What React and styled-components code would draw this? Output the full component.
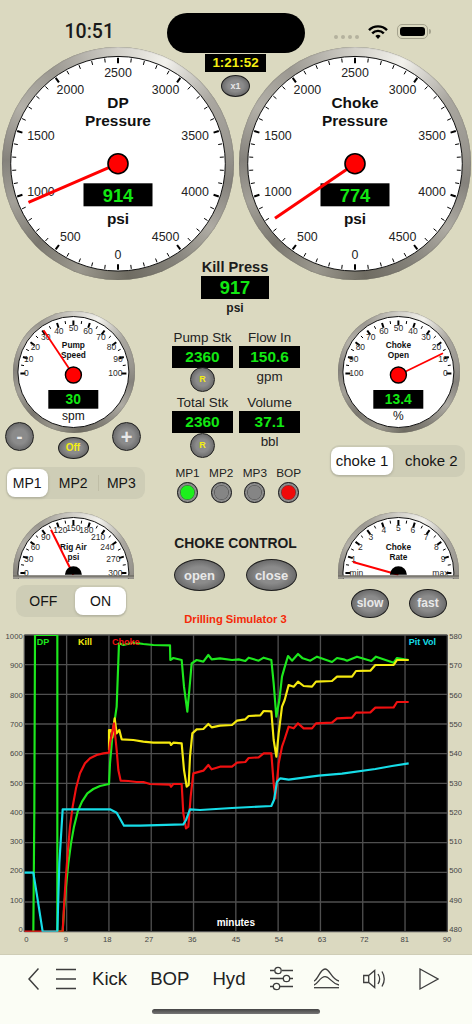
import React from "react";
import styled, { createGlobalStyle } from "styled-components";

const SANS = `"Liberation Sans", Arial, sans-serif`;

const Global = createGlobalStyle`
  html, body { margin: 0; padding: 0; background: #dbd9c0; }
  body { font-family: ${SANS}; }
`;

const Root = styled.div`
  position: relative;
  width: 472px;
  height: 1024px;
  overflow: hidden;
  background: #dbd9c0;
  color: #1c1c1c;
`;

/* status bar */
const StatusBar = styled.div`
  position: relative;
  height: 46.7px;
  display: flex;
  align-items: flex-start;
`;
const Clock = styled.div`
  margin: 20px 0 0 64.5px;
  font: 500 19.5px/24px Roboto, ${SANS};
  color: #1a1a1a;
`;
const Island = styled.div`
  position: absolute;
  left: 167px;
  top: 13px;
  width: 138px;
  height: 40px;
  border-radius: 20px;
  background: #000;
  z-index: 3;
`;
const StatusRight = styled.div`
  margin: 24px 0 0 auto;
  padding-right: 44px;
  display: flex;
  align-items: flex-start;
`;
const Dots = styled.div`
  display: flex;
  gap: 3px;
  margin: 11px 9px 0 0;
  i {
    width: 4px;
    height: 4px;
    border-radius: 50%;
    background: #b4b29d;
  }
`;
const Battery = styled.div`
  position: relative;
  box-sizing: border-box;
  width: 31px;
  height: 15px;
  margin-left: 9px;
  padding: 2px;
  border: 1px solid #a5a38e;
  border-radius: 5px;
  &::before {
    content: "";
    display: block;
    height: 100%;
    border-radius: 3px;
    background: #000;
  }
  &::after {
    content: "";
    position: absolute;
    right: -4px;
    top: 4px;
    width: 2px;
    height: 5px;
    border-radius: 0 2px 2px 0;
    background: #a5a38e;
  }
`;

/* gauges */
const METAL = `#d2d0c9 0deg, #f2f1ec 25deg, #aba8a1 55deg, #98958e 85deg, #85827c 100deg, #aeaba3 125deg,
  #85827a 150deg, #6f6c62 175deg, #9b988e 200deg, #7b7870 225deg, #a3a098 250deg, #85827c 272deg,
  #b3b0a8 300deg, #9c9992 325deg, #d2d0c9 360deg`;

const Dial = styled.div`
  position: relative;
  flex: none;
  width: ${(p) => p.$w}px;
  height: ${(p) => p.$h}px;
  margin-left: ${(p) => p.$ml || 0}px;
  border-radius: ${(p) => (p.$half ? `${p.$w / 2}px ${p.$w / 2}px 0 0` : "50%")};
  background: conic-gradient(from 0deg at 50% ${(p) => (p.$half ? "94%" : "50%")}, ${METAL});
  box-shadow: inset 0 0 1px #55524a;
  overflow: hidden;
  svg {
    display: block;
  }
`;

const rad = (d) => (d * Math.PI) / 180;

const Gauge = ({ cfg, labels, title, titleDy = [], value, unit, tip, ml }) => {
  const { w, h, half, cx, cy, hubY, face, start, step, divs, major, minor, rx, ry, inset, fs, labelColor,
    titleSize, unitBold, unitSize, unitY, box, valueSize, hubR, width } = cfg;
  const ticks = [];
  const total = half || start === -90 ? (labels.length - 1) * divs + 1 : labels.length * divs;
  for (let i = 0; i < total; i++) {
    const a = rad(start + (i * step) / divs);
    const big = i % divs === 0;
    const inner = big ? major[1] : minor[1];
    const outer = big ? major[0] : minor[0];
    ticks.push(
      <line
        key={i}
        x1={cx + Math.sin(a) * inner}
        y1={cy - Math.cos(a) * inner}
        x2={cx + Math.sin(a) * outer}
        y2={cy - Math.cos(a) * outer}
        stroke="#000"
        strokeWidth={big ? width * 2 : width}
      />
    );
  }
  return (
    <Dial $w={w} $h={h} $half={half} $ml={ml}>
      <svg width={w} height={h} viewBox={`0 0 ${w} ${h}`} fontFamily={SANS}>
        <circle cx={cx} cy={half ? cy : h / 2} r={face} fill="#fff" stroke="#111" strokeWidth="1" />
        {ticks}
        {labels.map((l, i) => {
          const a = rad(start + i * step);
          const extra = inset ? Math.max(l.length - 2, 0) * inset : 0;
          return (
            <text
              key={l}
              x={cx + Math.sin(a) * (rx - extra)}
              y={cy - Math.cos(a) * ry}
              fontSize={fs}
              fill={labelColor}
              textAnchor="middle"
              dominantBaseline="central"
            >
              {l}
            </text>
          );
        })}
        {title.map((t, i) => (
          <text
            key={t}
            x={cx}
            y={titleDy[i]}
            fontSize={titleSize}
            fontWeight="700"
            fill="#111"
            textAnchor="middle"
            dominantBaseline="central"
          >
            {t}
          </text>
        ))}
        {box && (
          <g>
            <rect x={box.x} y={box.y} width={box.w} height={box.h} fill="#000" />
            <text
              x={box.x + box.w / 2}
              y={box.y + box.h / 2 + 0.5}
              fontSize={valueSize}
              fontWeight="700"
              fill="#12e812"
              textAnchor="middle"
              dominantBaseline="central"
            >
              {value}
            </text>
            <text
              x={cx}
              y={unitY}
              fontSize={unitSize}
              fontWeight={unitBold ? 700 : 400}
              fill="#111"
              textAnchor="middle"
              dominantBaseline="central"
            >
              {unit}
            </text>
          </g>
        )}
        <line x1={cx} y1={hubY} x2={tip[0]} y2={tip[1]} stroke="#f00" strokeWidth={half ? 2 : cfg.needle} />
        {half ? (
          <g>
            <path d={`M${cx - hubR} ${hubY}a${hubR} ${hubR} 0 0 1 ${hubR * 2} 0z`} fill="#000" />
            <rect x="0" y={h - 3.2} width={w} height="3.2" fill="#9a978f" />
            <rect x="0" y={h - 3.2} width={w} height="1" fill="#5f5c54" />
          </g>
        ) : (
          <circle cx={cx} cy={hubY} r={hubR} fill="#f00" stroke="#000" strokeWidth={cfg.needle === 3 ? 1.6 : 1.4} />
        )}
      </svg>
    </Dial>
  );
};

const BIG = {
  w: 232, h: 233.5, cx: 116, cy: 116.7, hubY: 116.7, face: 107.3, start: 180, step: 36, divs: 5,
  major: [106, 100.5], minor: [106, 102], rx: 81, ry: 91, fs: 12.4, labelColor: "#222", width: 1,
  titleSize: 15.4, unitSize: 15.4, unitBold: true, unitY: 171.5, box: { x: 81.5, y: 136.3, w: 69, h: 23 },
  valueSize: 18.3, hubR: 10, needle: 3,
};
const SMALL = {
  w: 122, h: 122, cx: 60.4, cy: 62.4, hubY: 64, face: 55.5, start: -90, step: 18, divs: 2,
  major: [53, 48], minor: [53, 50], rx: 47, ry: 45, inset: 5, fs: 8.5, labelColor: "#2a2a2a", width: 1,
  titleSize: 8.3, unitSize: 12, unitY: 105.3, box: { x: 35.3, y: 79, w: 50, h: 18.7 }, valueSize: 13.8,
  hubR: 8, needle: 1.8,
};
const HALF = {
  ...SMALL, w: 121, h: 66.7, half: true, cx: 60.4, cy: 61, hubY: 62.8, box: null, hubR: 8.5,
};

const range = (from, to, by) => {
  const out = [];
  for (let v = from; by > 0 ? v <= to : v >= to; v += by) out.push(String(v));
  return out;
};

/* top section */
const TopGauges = styled.div`
  position: relative;
  display: flex;
  gap: 5px;
  padding-left: 1.5px;
`;
const TimerStack = styled.div`
  position: absolute;
  left: 205px;
  top: 7.5px;
  width: 61px;
  display: flex;
  flex-direction: column;
  align-items: center;
  gap: 3px;
`;
const Timer = styled.div`
  width: 100%;
  height: 18px;
  background: #000;
  color: #f3ee12;
  font-size: 13.4px;
  font-weight: 700;
  line-height: 18px;
  text-align: center;
`;
const KillStack = styled.div`
  position: absolute;
  left: 195px;
  top: 212px;
  width: 80px;
  display: flex;
  flex-direction: column;
  align-items: center;
  font-weight: 700;
`;
const KillLabel = styled.div`
  font-size: 14.6px;
  line-height: 16px;
`;
const KillUnit = styled.div`
  font-size: 12px;
  line-height: 14px;
  margin-top: 2px;
`;

const Readout = styled.div`
  box-sizing: border-box;
  width: ${(p) => p.$w}px;
  height: ${(p) => p.$h}px;
  margin-top: ${(p) => p.$mt || 0}px;
  background: #000;
  color: #12e812;
  font-size: ${(p) => p.$fs}px;
  font-weight: 700;
  line-height: ${(p) => p.$h + 1}px;
  text-align: center;
`;

const Pill = styled.button`
  flex: none;
  box-sizing: border-box;
  width: ${(p) => p.$w}px;
  height: ${(p) => p.$h}px;
  margin: ${(p) => p.$m || 0};
  padding: 0;
  border: 1.6px solid #1e1e1e;
  border-radius: 50%;
  background: radial-gradient(closest-side, #8b8b8b 55%, #6c6c6c 100%);
  color: ${(p) => p.$color || "#e8e8e8"};
  font-family: ${SANS};
  font-size: ${(p) => p.$fs}px;
  font-weight: 700;
  line-height: 1;
`;

/* middle section */
const MidRow = styled.div`
  display: flex;
  height: 192.3px;
  margin-top: 31px;
`;
const SideCol = styled.div`
  flex: none;
  width: ${(p) => p.$w}px;
  display: flex;
  flex-direction: column;
`;
const ButtonRow = styled.div`
  display: flex;
  align-items: flex-start;
  justify-content: space-between;
  width: 136px;
  margin: -11px 0 0 5px;
`;
const Track = styled.div`
  box-sizing: border-box;
  display: grid;
  grid-template-columns: ${(p) => p.$cols};
  width: ${(p) => p.$w}px;
  height: 32px;
  margin: ${(p) => p.$m};
  padding: 2px 1px;
  border-radius: 9px;
  background: #cecdb6;
`;
const Seg = styled.div`
  position: relative;
  box-sizing: border-box;
  padding: ${(p) => p.$pad || 0};
  border-radius: 8px;
  background: ${(p) => (p.$on ? "#fff" : "transparent")};
  box-shadow: ${(p) => (p.$on ? "0 1px 3px rgba(0,0,0,.18)" : "none")};
  font-size: ${(p) => p.$fs || 14}px;
  line-height: 28px;
  text-align: center;
  color: #141414;
  &::before {
    content: "";
    display: ${(p) => (p.$divider ? "block" : "none")};
    position: absolute;
    left: -1px;
    top: 6px;
    bottom: 6px;
    width: 1px;
    background: #bfbda6;
  }
`;
const MidCenter = styled.div`
  flex: none;
  width: 188px;
  padding: 19px 0 0 22.3px;
  box-sizing: border-box;
`;
const StatGrid = styled.div`
  display: grid;
  grid-template-columns: 60.4px 60.6px;
  grid-auto-rows: 65px;
  column-gap: 6.6px;
`;
const Stat = styled.div`
  display: flex;
  flex-direction: column;
  align-items: center;
`;
const StatLabel = styled.div`
  font-size: 13.4px;
  line-height: 16px;
  white-space: nowrap;
  color: #222;
`;
const StatUnit = styled.div`
  font-size: 13.4px;
  line-height: 16px;
  margin-top: 1px;
  color: #222;
`;
const Lamps = styled.div`
  display: flex;
  margin: 7px 0 0 -1.6px;
`;
const Lamp = styled.div`
  width: 33.7px;
  display: flex;
  flex-direction: column;
  align-items: center;
  gap: 2px;
  font-size: 11.8px;
  line-height: 13px;
  color: #222;
  &::after {
    content: "";
    box-sizing: border-box;
    width: 21px;
    height: 21px;
    border-radius: 50%;
    border: 3.5px solid #8b8b8b;
    outline: 1.4px solid #1a1a1a;
    outline-offset: -1.4px;
    background: ${(p) => p.$color || "#858585"};
    box-shadow: inset 0 0 0 0.6px #444;
  }
`;

/* lower section */
const LowRow = styled.div`
  display: flex;
  margin-top: 9px;
`;
const LowCenter = styled.div`
  flex: none;
  width: 203px;
  box-sizing: border-box;
  padding-top: 24px;
  display: flex;
  flex-direction: column;
  align-items: center;
`;
const Heading = styled.div`
  font-size: 13.9px;
  font-weight: 700;
  line-height: 14px;
  white-space: nowrap;
`;
const PillRow = styled.div`
  display: flex;
  justify-content: ${(p) => p.$justify || "center"};
  gap: ${(p) => p.$gap}px;
  margin: ${(p) => p.$m};
`;
const SimTitle = styled.div`
  margin-top: 22px;
  color: #f52a08;
  font-size: 11.2px;
  font-weight: 700;
  line-height: 13px;
  white-space: nowrap;
`;

/* chart */
const ChartSvg = styled.svg`
  display: block;
  width: 472px;
  height: 320px;
  margin-top: 3.5px;
`;

const DP = "100,905 103,540 105,15 172,15 172,905 188,905 192,840 198,770 205,700 213,640 222,590 233,545 246,515 262,490 280,477 300,468 327,462 330,400 337,320 350,230 357,40 370,45 400,38 430,42 460,45 510,46 511,90 520,84 545,90 552,170 562,245 568,180 575,100 590,90 610,95 625,75 635,88 660,85 696,90 716,88 736,93 746,83 776,92 791,83 814,90 821,160 829,260 838,210 846,140 853,115 864,78 876,92 894,72 908,85 931,92 951,80 996,96 1011,84 1031,88 1041,92 1071,80 1114,93 1128,80 1181,98 1191,84 1226,90";
const KILL = "327,360 327,300 333,300 337,322 344,265 350,310 358,300 365,328 400,330 430,335 460,338 510,338 513,345 520,338 545,340 552,420 560,470 566,465 570,380 577,310 590,298 610,297 625,282 635,292 660,287 696,285 711,272 736,268 746,258 781,256 791,243 814,244 821,330 829,380 836,310 846,230 854,210 866,165 881,170 894,155 911,168 936,170 948,155 996,153 1011,140 1056,140 1068,123 1111,122 1126,105 1181,105 1191,90 1226,90";
const CHOKE = "73,905 188,905 192,830 197,750 203,670 210,590 218,530 228,475 240,430 255,400 270,385 290,375 310,370 327,368 330,340 342,280 350,360 355,420 362,452 385,453 410,456 430,456 450,462 510,464 513,470 520,462 545,462 550,550 558,595 565,590 572,500 580,430 610,422 625,405 635,418 660,410 696,410 711,398 736,396 746,384 776,382 791,370 814,370 821,460 826,505 836,400 846,350 853,330 866,290 881,295 894,280 911,295 936,295 948,280 996,278 1011,265 1056,263 1068,248 1111,247 1126,233 1181,232 1191,216 1226,216";
const PIT = "73,728 100,728 110,790 128,905 172,905 178,700 188,538 330,538 350,548 372,587 420,587 550,583 558,570 570,538 600,540 696,534 814,528 822,510 831,455 841,445 866,449 956,437 1026,431 1126,417 1176,408 1226,400";

const GRID_X = Array.from({ length: 11 }, (_, i) => 73 + i * 126.9);
const GRID_Y = Array.from({ length: 11 }, (_, i) => 15 + i * 89);
const X_LABELS = [79, 198, 322, 447, 577, 708, 837, 966, 1093, 1214, 1341];

const Chart = () => (
  <ChartSvg viewBox="0 0 1416 960" fontFamily={SANS}>
    <rect x="73" y="15" width="1269" height="890" fill="#000" />
    <g stroke="#4f4f4f" strokeWidth="4">
      {GRID_X.map((x) => (
        <line key={x} x1={x} y1="15" x2={x} y2="905" />
      ))}
      {GRID_Y.map((y) => (
        <line key={y} x1="73" y1={y} x2="1342" y2={y} />
      ))}
    </g>
    <clipPath id="plot">
      <rect x="73" y="15" width="1269" height="890" />
    </clipPath>
    <g clipPath="url(#plot)" fill="none" strokeWidth="6.5" strokeLinejoin="round">
      <polyline points={DP} stroke="#1de81d" />
      <polyline points={KILL} stroke="#f5e90f" />
      <polyline points={CHOKE} stroke="#f01010" />
      <polyline points={PIT} stroke="#16dde8" />
    </g>
    <g fontSize="23" fill="#444" dominantBaseline="central">
      {GRID_Y.map((_, i) => (
        <text key={i} x="68" y={20 + i * 87.8} textAnchor="end">
          {(10 - i) * 100}
        </text>
      ))}
      {GRID_Y.map((_, i) => (
        <text key={i} x="1348" y={20 + i * 87.8}>
          {580 - i * 10}
        </text>
      ))}
      {X_LABELS.map((x, i) => (
        <text key={x} x={x} y="929" textAnchor="middle">
          {i * 9}
        </text>
      ))}
    </g>
    <g fontSize="27" fontWeight="700" dominantBaseline="central">
      <text x="110" y="37" fill="#1de81d">DP</text>
      <text x="234" y="37" fill="#f5e90f">Kill</text>
      <text x="336" y="37" fill="#f01010">Choke</text>
      <text x="1226" y="37" fill="#16dde8">Pit Vol</text>
      <text x="650" y="877" fontSize="30" fill="#fff">minutes</text>
    </g>
  </ChartSvg>
);

/* bottom bar */
const BottomBar = styled.div`
  position: relative;
  box-sizing: border-box;
  height: 70px;
  margin-top: 4px;
  padding: 6px 0 0 28px;
  display: flex;
  align-items: flex-start;
  border-top: 1px solid #cfcdb6;
  background: #fbfdf5;
`;
const BarIcon = styled.svg`
  flex: none;
  margin-left: ${(p) => p.$ml || 0}px;
  fill: none;
  stroke: #3d3d3d;
  stroke-width: 1.3;
`;
const BarText = styled.div`
  flex: none;
  margin-left: ${(p) => p.$ml}px;
  font-size: 18.6px;
  line-height: 36px;
  color: #222;
`;
const HomeBar = styled.div`
  position: absolute;
  left: 152px;
  bottom: 10px;
  width: 168px;
  height: 5px;
  border-radius: 3px;
  background: linear-gradient(#444, #777);
`;

export default function App() {
  return (
    <Root>
      <Global />
      <StatusBar>
        <Clock>10:51</Clock>
        <Island />
        <StatusRight>
          <Dots>
            <i />
            <i />
            <i />
            <i />
          </Dots>
          <svg width="20" height="15" viewBox="0 0 20 15" fill="none" stroke="#000" strokeWidth="2.4">
            <path d="M1 6.2a12.6 12.6 0 0 1 18 0" />
            <path d="M4.2 9.4a8 8 0 0 1 11.6 0" />
            <path d="M7.4 12a3.6 3.6 0 0 1 5.2 0L10 15z" fill="#000" stroke="none" />
          </svg>
          <Battery />
        </StatusRight>
      </StatusBar>

      <TopGauges>
        <Gauge
          cfg={BIG}
          labels={range(0, 4500, 500)}
          title={["DP", "Pressure"]}
          titleDy={[55.5, 73.8]}
          value="914"
          unit="psi"
          tip={[26.5, 155.3]}
        />
        <Gauge
          cfg={BIG}
          labels={range(0, 4500, 500)}
          title={["Choke", "Pressure"]}
          titleDy={[55.5, 73.8]}
          value="774"
          unit="psi"
          tip={[36, 171.3]}
        />
        <TimerStack>
          <Timer>1:21:52</Timer>
          <Pill $w={29} $h={22} $fs={9}>x1</Pill>
        </TimerStack>
        <KillStack>
          <KillLabel>Kill Press</KillLabel>
          <Readout $w={68} $h={22.6} $fs={18.3} $mt={1.5}>917</Readout>
          <KillUnit>psi</KillUnit>
        </KillStack>
      </TopGauges>

      <MidRow>
        <SideCol $w={150}>
          <Gauge
            cfg={SMALL}
            labels={range(0, 100, 10)}
            title={["Pump", "Speed"]}
            titleDy={[33.6, 44]}
            value="30"
            unit="spm"
            tip={[30.6, 19.3]}
            ml={12.5}
          />
          <ButtonRow>
            <Pill $w={29} $h={29} $fs={18}>-</Pill>
            <Pill $w={31} $h={22} $fs={10} $color="#f3ee12" $m="15px 0 0">Off</Pill>
            <Pill $w={29} $h={29} $fs={20}>+</Pill>
          </ButtonRow>
          <Track $w={139.3} $cols="41px 51px 1fr" $m="7.7px 0 0 5.7px">
            <Seg $on>MP1</Seg>
            <Seg>MP2</Seg>
            <Seg $divider>MP3</Seg>
          </Track>
        </SideCol>

        <MidCenter>
          <StatGrid>
            <Stat>
              <StatLabel>Pump Stk</StatLabel>
              <Readout $w={60.4} $h={21.7} $fs={15.4}>2360</Readout>
              <Pill $w={25} $h={25} $fs={9} $color="#f3ee12" $m="-0.5px 0 0">R</Pill>
            </Stat>
            <Stat>
              <StatLabel>Flow In</StatLabel>
              <Readout $w={60.6} $h={21.7} $fs={15.4}>150.6</Readout>
              <StatUnit>gpm</StatUnit>
            </Stat>
            <Stat>
              <StatLabel>Total Stk</StatLabel>
              <Readout $w={60.4} $h={21.7} $fs={15.4}>2360</Readout>
              <Pill $w={25} $h={25} $fs={9} $color="#f3ee12" $m="0">R</Pill>
            </Stat>
            <Stat>
              <StatLabel>Volume</StatLabel>
              <Readout $w={60.6} $h={21.7} $fs={15.4}>37.1</Readout>
              <StatUnit>bbl</StatUnit>
            </Stat>
          </StatGrid>
          <Lamps>
            <Lamp $color="#1cf01c">MP1</Lamp>
            <Lamp>MP2</Lamp>
            <Lamp>MP3</Lamp>
            <Lamp $color="#f00a0a">BOP</Lamp>
          </Lamps>
        </MidCenter>

        <SideCol $w={134}>
          <Gauge
            cfg={SMALL}
            labels={range(100, 0, -10)}
            title={["Choke", "Open"]}
            titleDy={[33.6, 44]}
            value="13.4"
            unit="%"
            tip={[105, 42.3]}
          />
          <Track $w={135.7} $cols="62.6px 1fr" $m="12px 0 0 -8.3px">
            <Seg $on $fs={15}>choke 1</Seg>
            <Seg $fs={15} $pad="0 0 0 5px">choke 2</Seg>
          </Track>
        </SideCol>
      </MidRow>

      <LowRow>
        <SideCol $w={134}>
          <Gauge
            cfg={HALF}
            labels={range(0, 300, 30)}
            title={["Rig Air", "psi"]}
            titleDy={[35, 45.4]}
            tip={[38, 17.7]}
            ml={12.5}
          />
          <Track $w={111.6} $cols="1fr 51.4px" $m="5.5px 0 0 15.7px">
            <Seg $pad="0 5px 0 0">OFF</Seg>
            <Seg $on>ON</Seg>
          </Track>
        </SideCol>
        <LowCenter>
          <Heading>CHOKE CONTROL</Heading>
          <PillRow $gap={21} $m="9px 0 0">
            <Pill $w={51} $h={32} $fs={13}>open</Pill>
            <Pill $w={51} $h={32} $fs={13}>close</Pill>
          </PillRow>
          <SimTitle>Drilling Simulator 3</SimTitle>
        </LowCenter>
        <SideCol $w={134}>
          <Gauge
            cfg={HALF}
            labels={["min", "1", "2", "3", "4", "5", "6", "7", "8", "9", "max"]}
            title={["Choke", "Rate"]}
            titleDy={[35, 45.4]}
            tip={[15, 50]}
            ml={0.7}
          />
          <PillRow $gap={20} $justify="flex-start" $m="9.5px 0 0 14px">
            <Pill $w={38} $h={29.4} $fs={12}>slow</Pill>
            <Pill $w={38} $h={29.4} $fs={12}>fast</Pill>
          </PillRow>
        </SideCol>
      </LowRow>

      <Chart />

      <BottomBar>
        <BarIcon width="11" height="36" viewBox="0 0 11 36">
          <polyline points="10.5,7.5 1,18 10.5,28.5" strokeWidth="1.5" />
        </BarIcon>
        <BarIcon width="20" height="36" viewBox="0 0 20 36" $ml={17} strokeWidth="1.5">
          <path d="M0 8.5h20M0 18h20M0 27.5h20" />
        </BarIcon>
        <BarText $ml={16}>Kick</BarText>
        <BarText $ml={23}>BOP</BarText>
        <BarText $ml={23}>Hyd</BarText>
        <BarIcon width="23" height="36" viewBox="0 0 23 36" $ml={24}>
          <path d="M0 9.5h4.5M12 9.5h11M0 17.5h13M20 17.5h3M0 25.5h3M10 25.5h13" />
          <circle cx="8" cy="9.5" r="3.2" />
          <circle cx="16.5" cy="17.5" r="3.2" />
          <circle cx="6.5" cy="25.5" r="3.2" />
        </BarIcon>
        <BarIcon width="25" height="36" viewBox="0 0 25 36" $ml={21}>
          <path d="M0 26.7h25" />
          <path d="M0 20C4 19 6 8 11 8c5 0 6 10 14 12" />
          <path d="M0 24c4-1 6-8.3 11-8.3 5 0 6 6.5 14 8.3" />
        </BarIcon>
        <BarIcon width="25" height="36" viewBox="0 0 25 36" $ml={24}>
          <path d="M0.7 14.5h5v7h-5zM5.7 14.5l6-5v17l-6-5" />
          <path d="M15 13c2 3 2 7 0 10M19 10.5c3 5 3 10 0 15" />
        </BarIcon>
        <BarIcon width="20" height="36" viewBox="0 0 20 36" $ml={31} strokeWidth="1.5">
          <polygon points="1,8 19,18 1,28" />
        </BarIcon>
        <HomeBar />
      </BottomBar>
    </Root>
  );
}
